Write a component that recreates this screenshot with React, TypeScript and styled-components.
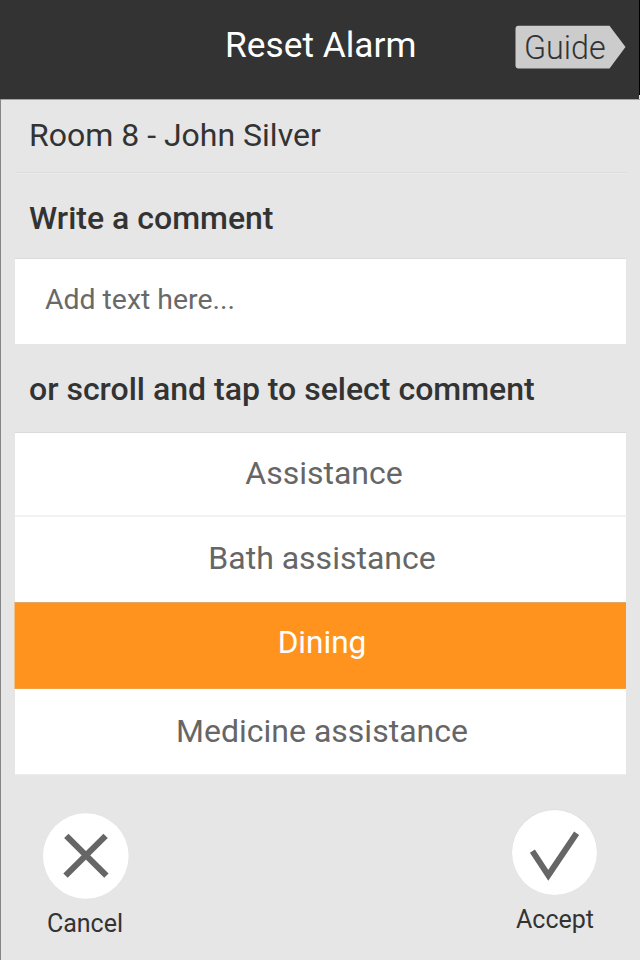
import React from "react";
import styled, { createGlobalStyle } from "styled-components";

const GlobalStyle = createGlobalStyle`
  * { box-sizing: border-box; }
  body { margin: 0; background: #e6e6e6; font-family: Roboto, sans-serif; }
  button { border: 0; padding: 0; background: none; font: inherit; color: inherit; }
`;

const Screen = styled.main`
  width: 640px;
  height: 960px;
  overflow: hidden;
  display: flex;
  flex-direction: column;
  background: #e6e6e6;
  color: #333;
`;

const Header = styled.header`
  height: 99px;
  flex: none;
  display: grid;
  grid-template-columns: 225px 1fr 111px 13px 1px;
  background: #333;
  box-shadow: 0 1px #a3a3a3;
`;

const Title = styled.h1`
  grid-column: 2;
  margin: 26px 0 0;
  font-size: 35.3px;
  line-height: 38px;
  font-weight: 400;
  white-space: nowrap;
  color: #fff;
`;

const GuideButton = styled.button`
  grid-column: 3;
  display: grid;
  width: 111px;
  height: 44px;
  margin-top: 25px;
  text-align: left;

  > * { grid-area: 1 / 1; }
`;

const GuideLabel = styled.span`
  padding: 1px 0 0 9px;
  font-size: 32.3px;
  line-height: 44px;
  font-weight: 300;
`;

const Edge = styled.div`
  grid-column: 5;
  background: #e6e6e6;
  box-shadow: inset 0 95px #000;
`;

const Body = styled.div`
  flex: 1;
  display: flex;
  flex-direction: column;
  border-left: 1px solid #858585;
  padding: 0 13px 0 14px;
`;

const Room = styled.div`
  height: 75px;
  padding: 0 14px;
  font-size: 32px;
  line-height: 72px;
  border-bottom: 1px solid #ececec;
  box-shadow: inset 0 -1px #dcdcdc;
  white-space: nowrap;
`;

const Heading = styled.h2<{ $height: number; $line: number }>`
  height: ${(p) => p.$height}px;
  margin: 0;
  padding: 0 14px;
  font-size: 32px;
  font-weight: 500;
  line-height: ${(p) => p.$line}px;
  white-space: nowrap;
`;

const CommentInput = styled.input`
  height: 85px;
  width: 611px;
  border: 0;
  border-radius: 0;
  padding: 0 30px 4px;
  outline: 0;
  background: #fff;
  box-shadow: 0 -1px #dcdcdc;
  font: 400 28.4px Roboto, sans-serif;
  &::placeholder { color: #696969; opacity: 1; }
`;

const List = styled.div`
  width: 611px;
  display: flex;
  flex-direction: column;
  background: #fff;
  box-shadow: 0 -1px #dadada, 0 1px #ededed;
`;

const Option = styled.button<{ $height: number; $lower: number; $shift?: number; $selected?: boolean; $divided?: boolean }>`
  height: ${(p) => p.$height}px;
  display: flex;
  justify-content: center;
  align-items: center;
  padding: 0 0 ${(p) => p.$lower}px ${(p) => p.$shift ?? 3}px;
  font-size: ${(p) => (p.$selected ? 31.6 : 32)}px;
  line-height: 38px;
  white-space: nowrap;
  color: ${(p) => (p.$selected ? "#fff" : "#666")};
  background: ${(p) => (p.$selected ? "#ff931e" : "#fff")};
  box-shadow: ${(p) => (p.$selected ? "inset 0 1px #e0a868, inset 0 -1px #f3a044, -1px 0 #efc08a" : "none")};
  border-bottom: ${(p) => (p.$divided ? "2px solid #f2f2f2" : "0")};
`;

const Actions = styled.footer`
  display: flex;
  justify-content: space-between;
  align-items: flex-start;
  width: 555px;
  margin-left: 28px;
`;

const Action = styled.button<{ $top: number }>`
  width: 86px;
  margin-top: ${(p) => p.$top}px;
  display: flex;
  flex-direction: column;
  align-items: center;
  font-size: 25px;
  line-height: 30px;
  > svg { display: block; margin-bottom: 10px; }
`;

const ActionLabel = styled.span<{ $inset?: number }>`
  padding-right: ${(p) => p.$inset ?? 0}px;
`;

const CancelIcon = () => (
  <svg width="86" height="86" viewBox="0 0 86 86" fill="none">
    <circle cx="42.8" cy="43" r="42.8" fill="#fff" />
    <path d="M23.3 22.9 63.4 62.6M62.6 22.9 22.5 62.6" stroke="#666" strokeWidth="6.2" />
  </svg>
);

const AcceptIcon = () => (
  <svg width="86" height="86" viewBox="0.4 0 86 86" fill="none" overflow="visible">
    <circle cx="42.9" cy="43.2" r="42.7" fill="#d9d9d9" />
    <circle cx="42.9" cy="43.6" r="42.5" fill="#fff" />
    <path d="M20.8 42.2 36.7 66.3 65 24.3" stroke="#666" strokeWidth="6" />
  </svg>
);

export default function App() {
  return (
    <>
      <GlobalStyle />
      <Screen>
        <Header>
          <Title>Reset Alarm</Title>
          <GuideButton>
            <svg width="111" height="44" viewBox="0 0 111 44">
              <path d="M3.5.7H94.5L110.5 22 94.5 43.5H3.5Q.5 43.5.5 40.5V3.7Q.5.7 3.5.7Z" fill="#ccc" />
            </svg>
            <GuideLabel>Guide</GuideLabel>
          </GuideButton>
          <Edge />
        </Header>
        <Body>
          <Room>Room 8 - John Silver</Room>
          <Heading $height={85} $line={89}>Write a comment</Heading>
          <CommentInput placeholder="Add text here..." />
          <Heading $height={89} $line={91}>or scroll and tap to select comment</Heading>
          <List>
            <Option $height={84} $lower={2} $shift={7} $divided>Assistance</Option>
            <Option $height={85} $lower={4}>Bath assistance</Option>
            <Option $height={87} $lower={6} $selected>Dining</Option>
            <Option $height={85} $lower={1}>Medicine assistance</Option>
          </List>
          <Actions>
            <Action $top={39}><CancelIcon /><ActionLabel $inset={2}>Cancel</ActionLabel></Action>
            <Action $top={35}><AcceptIcon /><ActionLabel>Accept</ActionLabel></Action>
          </Actions>
        </Body>
      </Screen>
    </>
  );
}
